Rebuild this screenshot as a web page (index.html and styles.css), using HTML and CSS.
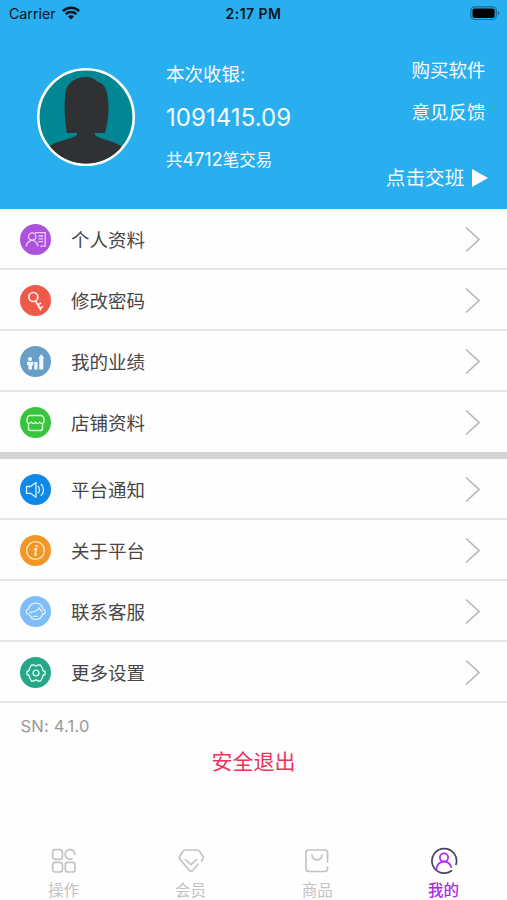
FILE: index.html
```html
<!DOCTYPE html>
<html lang="zh-CN">
<head>
<meta charset="utf-8">
<title>我的</title>
<link rel="stylesheet" href="styles.css">
</head>
<body>
<div class="app">
  <header class="header">
    <div class="status">
      <div class="carrier"><span>Carrier</span>
        <svg width="18" height="14" viewBox="0 0 18 14" fill="none" stroke="#06151f" stroke-width="2.5"><path d="M.9 5.1C5.3.7 12.7.7 17.1 5.1M3.700 8.100c2.900-2.800 7.700-2.800 10.600 0"/><path d="M6 10.500c1.800-1.600 4.200-1.600 6 0L9 13.600z" fill="#06151f" stroke="none"/></svg>
      </div>
      <div class="time">2:17 PM</div>
      <svg class="battery" width="31" height="15" viewBox="0 0 31 15"><rect x=".9" y=".9" width="25.4" height="12.6" rx="3.6" fill="none" stroke="#176b93" stroke-width="1.2"/><rect x="2.5" y="2.5" width="22.2" height="9.4" rx="2" fill="#000"/><path d="M27.8 5v4.600c2-.8 2-3.800 0-4.600z" fill="#176b93"/></svg>
    </div>
    <div class="profile">
      <svg class="avatar" width="98" height="98" viewBox="0 0 98 98"><defs><clipPath id="face"><circle cx="49" cy="49" r="46.5"/></clipPath></defs><circle cx="49" cy="49" r="47.7" fill="#018793" stroke="#fff" stroke-width="2.6"/><g clip-path="url(#face)" fill="#303132"><path d="M30 65c-2-10-3-24-2-36C28 17 36 9 49 9c5 0 9 2 12 5 8 2 10 11 10.500 23 .5 10-1.500 21-3.500 28H58v2c6 5 17 5 26 11l4 20H10l3-20c8-6 20-6 27-11v-2z"/></g></svg>
      <div class="sales"><div class="label">本次收银:</div><div class="amount">1091415.09</div><div class="count">共<span>4712</span>笔交易</div></div>
      <div class="links"><div class="buy">购买软件</div><div class="feedback">意见反馈</div><div class="shift">点击交班<svg width="16" height="18" viewBox="0 0 16 18"><path d="M0 0l16 9-16 9z" fill="#fff"/></svg></div></div>
    </div>
  </header>
  <main>
    <section class="group">
      <div class="row"><svg class="icon" viewBox="0 0 31 31"><circle cx="15.500" cy="15.500" r="15.500" fill="#ac52dc"/><g fill="none" stroke="#edcffb" stroke-width="1.300"><circle cx="12.200" cy="12.500" r="3.700"/><path d="M6.200 22.500c.4-3.500 2.500-5.300 6-6.300 3.300.8 5.300 2.800 5.800 6.300M15 8.700h10.200v13.500h-5M18.500 12h4.500M18.500 14.800h4.500M18.500 17.600h4.500"/></g></svg><span>个人资料</span><svg class="chevron" viewBox="0 0 16 27"><path d="M1 1.500l13 12-13 12"/></svg></div>
      <div class="row"><svg class="icon" viewBox="0 0 31 31"><circle cx="15.500" cy="15.500" r="15.500" fill="#ef5949"/><g fill="none" stroke="#fff0e9" stroke-width="1.700"><circle cx="13.300" cy="12" r="4.500"/><path d="M15.500 16l5.500 9.200M17.700 20l3.500-2M19.800 23.500l3.200-2"/></g></svg><span>修改密码</span><svg class="chevron" viewBox="0 0 16 27"><path d="M1 1.500l13 12-13 12"/></svg></div>
      <div class="row"><svg class="icon" viewBox="0 0 31 31"><circle cx="15.500" cy="15.500" r="15.500" fill="#689fc7"/><g fill="#f3faff"><circle cx="10" cy="13" r="2.100"/><path d="M7 15.700h6.200v3.500h-1.300v4.300H8.500v-4.300H7zM14.300 16h3.200v7.500h-3.200zM19.300 12.500h-1l3-4.500 3 4.500h-1v11h-4z"/></g></svg><span>我的业绩</span><svg class="chevron" viewBox="0 0 16 27"><path d="M1 1.500l13 12-13 12"/></svg></div>
      <div class="row"><svg class="icon" viewBox="0 0 31 31"><circle cx="15.500" cy="15.500" r="15.500" fill="#38c43c"/><g fill="none" stroke="#dcffd9" stroke-width="1.400" stroke-linejoin="round"><path d="M7 14.500c0-3 .8-6 3-6h11c2.200 0 3 3 3 6 0 2.300-3.500 2.500-4.500.5-1.300 2.200-3 2.200-4 0-1 2.200-2.700 2.200-4 0-1 2-4.500 1.800-4.500-.5zM8.500 17v4.500q0 2 2 2h10q2 0 2-2V17"/></g></svg><span>店铺资料</span><svg class="chevron" viewBox="0 0 16 27"><path d="M1 1.500l13 12-13 12"/></svg></div>
    </section>
    <section class="group">
      <div class="row"><svg class="icon" viewBox="0 0 31 31"><circle cx="15.500" cy="15.500" r="15.500" fill="#0f88e8"/><g fill="none" stroke="#daf2ff" stroke-width="1.300" stroke-linejoin="round"><path d="M6.500 12.500h4l5.500-4v14.800l-5.500-4h-4zM18 12c2 2 2 5.500 0 7.500M20.800 10c3.600 3 3.600 8.800 0 11.800"/></g></svg><span>平台通知</span><svg class="chevron" viewBox="0 0 16 27"><path d="M1 1.500l13 12-13 12"/></svg></div>
      <div class="row"><svg class="icon" viewBox="0 0 31 31"><circle cx="15.500" cy="15.500" r="15.500" fill="#f19728"/><circle cx="15.500" cy="15.500" r="8.900" fill="none" stroke="#ffeac9" stroke-width="1.200"/><circle cx="16.500" cy="11" r="1.100" fill="#fff5dd"/><path d="M14 14.500l2.300-.7-1.300 6 2-.6" fill="none" stroke="#fff5dd" stroke-width="1.500"/></svg><span>关于平台</span><svg class="chevron" viewBox="0 0 16 27"><path d="M1 1.500l13 12-13 12"/></svg></div>
      <div class="row"><svg class="icon" viewBox="0 0 31 31"><circle cx="15.500" cy="15.500" r="15.500" fill="#7fbdf6"/><g fill="none" stroke="#e5f5ff" stroke-width="1.200" stroke-linecap="round"><path d="M8.500 18c-3 0-3-4.500 0-5 1-3.700 3.800-5.800 7.300-5.800s6.200 2.100 7.200 5.800c3 .5 3 5 0 5M9.700 16.300c4.300 0 7.500-1.300 9.500-4.300.8 1.800 2 3 3.500 3.500M9.500 18.500c1.200 3.200 3.300 5 6.300 5 3.500 0 6-2.500 7-6M13.500 20.300h4"/></g></svg><span>联系客服</span><svg class="chevron" viewBox="0 0 16 27"><path d="M1 1.500l13 12-13 12"/></svg></div>
      <div class="row"><svg class="icon" viewBox="0 0 31 31"><circle cx="15.500" cy="15.500" r="15.500" fill="#26a888"/><g fill="none" stroke="#d2fff1" stroke-width="1.400" stroke-linejoin="round"><path d="M11.500 8h2.500q2 1.800 4 0h2.500l2 3.500q-.3 2.300 2.500 3v3q-2.800.7-2.500 3l-2 3.500H18q-2-1.800-4 0h-2.500l-2-3.500q.3-2.300-2.500-3v-3q2.800-.7 2.500-3z"/><circle cx="16" cy="16" r="2.900"/></g></svg><span>更多设置</span><svg class="chevron" viewBox="0 0 16 27"><path d="M1 1.500l13 12-13 12"/></svg></div>
    </section>
    <div class="version">SN: 4.1.0</div>
    <div class="logout">安全退出</div>
  </main>
  <nav class="tabs">
    <div class="tab"><svg viewBox="0 0 28 28"><rect x="2.700" y="2.700" width="9.700" height="9.700" rx="2.500"/><rect x="2.700" y="15.300" width="9.700" height="9.700" rx="2.500"/><rect x="15.300" y="15.300" width="9.700" height="9.700" rx="2.500"/><path d="M24.800 7.500a4.850 4.850 0 1 0-3 4.400"/></svg><span>操作</span></div>
    <div class="tab"><svg viewBox="0 0 28 28"><path d="M24.500 14l1.600-2.300q.6-1-.1-2l-3.600-5.400q-.8-1.300-2.200-1.300H8.300Q6.900 3 6.100 4.300L2.500 9.700q-.7 1 .1 2l10 12q1.400 1.500 2.800 0l5.600-6.500M8.500 12.500l5.500 5.200 5.500-5.200"/></svg><span>会员</span></div>
    <div class="tab"><svg viewBox="0 0 28 28"><path d="M24.500 15V5.500q0-2.500-2.500-2.500H5.500Q3 3 3 5.500v16Q3 24.500 5.800 24.500H22q2.500 0 2.500-3V20M9 8c.5 6.500 9.500 6.500 10 0"/></svg><span>商品</span></div>
    <div class="tab active"><svg viewBox="0 0 28 28"><path stroke="#46465f" d="M26 17.500A12.300 12.300 0 1 0 21.500 23.800"/><circle cx="14" cy="10.500" r="4.100"/><path d="M6.500 22.500c.4-5 3.300-7.900 7.500-7.900 3.500 0 6 1.900 7.300 5.400"/></svg><span>我的</span></div>
  </nav>
</div>
</body>
</html>
```

FILE: styles.css
```css
* { box-sizing: border-box; }
body { margin: 0; background: #fefefe; font-family: Inter, "Noto Sans CJK SC", sans-serif; color: #464646; }
svg { display: block; flex: none; }
.app { height: 900px; display: flex; flex-direction: column; overflow: hidden; }
.header { height: 208.500px; flex: none; background: #29aeef; color: #f7fdff; }
.status { height: 28px; display: grid; grid-template-columns: 1fr auto 1fr; align-items: center; padding: 0 6px 0 9px; color: #06151f; font-size: 14.200px; line-height: 28px; }
.carrier { display: flex; align-items: center; gap: 6px; }
.carrier svg { margin-top: -2px; }
.time { font-weight: 600; margin-left: -3px; font-size: 14px; letter-spacing: .45px; }
.battery { justify-self: end; margin-top: -1px; }
.profile { height: 180px; display: flex; padding: 0 21.500px 0 37px; }
.avatar { margin-top: 40px; }
.sales { margin: 32px 0 0 31px; flex: 1; white-space: nowrap; }
.label { font-size: 18.500px; line-height: 28px; }
.amount { font-size: 24px; line-height: 30px; margin-top: 15px; letter-spacing: .05px; }
.count { font-size: 16.500px; line-height: 24px; margin-top: 15px; }
.count span { font-size: 18px; }
.links { display: flex; flex-direction: column; align-items: flex-end; padding-top: 28px; font-size: 18.500px; line-height: 28px; }
.feedback { margin-top: 14px; }
.shift { display: flex; align-items: center; gap: 7px; font-size: 19.700px; margin: 38px -2px 0 0; }
.group + .group { border-top: 7px solid #d4d4d4; }
.row { height: 61.150px; display: flex; align-items: center; padding: 2px 26.500px 0 20.400px; border-bottom: 2px solid #e5e5e5; font-size: 18.500px; line-height: 30px; }
.group:first-child .row:last-child { border-bottom: 0; height: 60px; }
.icon { width: 31px; height: 31px; margin-right: 19.600px; }
.row span { flex: 1; padding-top: 1px; }
.chevron { width: 16px; height: 27px; fill: none; stroke: #b7b7b9; stroke-width: 1.700; }
.version { padding: 10px 0 0 20.500px; font-size: 16.500px; line-height: 26px; letter-spacing: .2px; color: #999; }
.logout { margin-top: 8px; text-align: center; color: #ef3159; font-size: 21px; line-height: 30px; }
.tabs { display: grid; grid-template-columns: repeat(4, 1fr); margin-top: auto; height: 54px; flex: none; }
.tab { display: flex; flex-direction: column; align-items: center; color: #c3c3c3; font-size: 15.500px; line-height: 22px; }
.tab svg { width: 28px; height: 28px; margin: 1px 0 5px; fill: none; stroke: currentColor; stroke-width: 1.700; stroke-linecap: round; stroke-linejoin: round; }
.tab:not(.active) { padding-left: 1px; }
.active { color: #a92be8; }
.active span { font-weight: 500; }
```
